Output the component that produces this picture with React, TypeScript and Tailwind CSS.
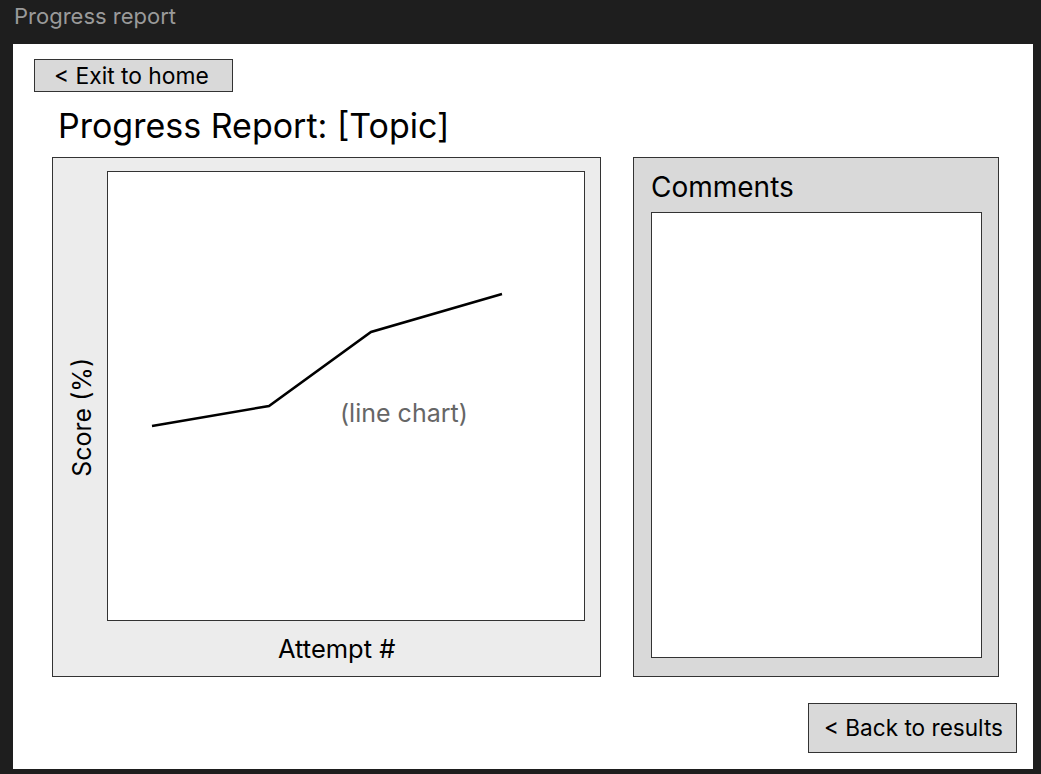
const points = [
  [44, 254],
  [161, 234],
  [263, 160],
  [394, 122],
];

const App = () => {
  return (
    <div className="w-[1041px] h-[774px] bg-[#1e1e1e] flex flex-col font-['Inter',sans-serif] overflow-hidden">
      {/* --- window title --- */}
      <div className="h-[44px] pl-[14px] pt-[2px] text-[22px] leading-[28px] text-[#9a9a9a]">
        Progress report
      </div>

      {/* --- page --- */}
      <div className="ml-[13px] mr-[8px] h-[725px] bg-white flex flex-col">
        <button className="self-start ml-[21px] mt-[15px] w-[199px] h-[33px] bg-[#d9d9d9] border border-[#333] text-left pl-[19px] pt-[2px] text-[22.8px] leading-none text-black">
          &lt; Exit to home
        </button>

        <h1 className="ml-[45px] mt-[14px] text-[34px] leading-[40px] text-black">
          Progress Report: [Topic]
        </h1>

        <div className="flex gap-[32px] ml-[39px] mt-[11px]">
          {/* --- chart panel --- */}
          <div className="w-[549px] h-[520px] bg-[#ececec] border border-[#333] grid grid-cols-[54px_478px] grid-rows-[450px_1fr] pt-[13px]">
            <div className="flex items-center justify-center pt-[42px] pl-[4px]">
              <span className="[writing-mode:vertical-rl] rotate-180 text-[25px] leading-none text-black">
                Score (%)
              </span>
            </div>
            <div className="relative bg-white border border-[#333]">
              <svg
                className="absolute inset-0"
                width="478"
                height="450"
                viewBox="0 0 478 450"
              >
                <polyline
                  points={points.map((p) => p.join(",")).join(" ")}
                  fill="none"
                  stroke="#000"
                  strokeWidth="2.5"
                />
              </svg>
              <span className="absolute left-[232px] top-[226px] text-[25px] leading-[30px] text-[#666]">
                (line chart)
              </span>
            </div>
            <div />
            <div className="flex items-center justify-start pl-[171px] pt-[2px] text-[25.5px] text-black">
              Attempt #
            </div>
          </div>

          {/* --- comments panel --- */}
          <div className="w-[366px] h-[520px] bg-[#d9d9d9] border border-[#333] flex flex-col px-[17px] pt-[13px] pb-[18px]">
            <h2 className="text-[28px] leading-[33px] text-black mb-[8px]">
              Comments
            </h2>
            <div className="flex-1 bg-white border border-[#333] mr-[-1px]" />
          </div>
        </div>

        <button className="self-end mr-[16px] mt-[26px] w-[209px] h-[50px] bg-[#d9d9d9] border border-[#333] text-[22.6px] leading-none text-black pl-[2px]">
          &lt; Back to results
        </button>
      </div>
    </div>
  );
};

export default App;
